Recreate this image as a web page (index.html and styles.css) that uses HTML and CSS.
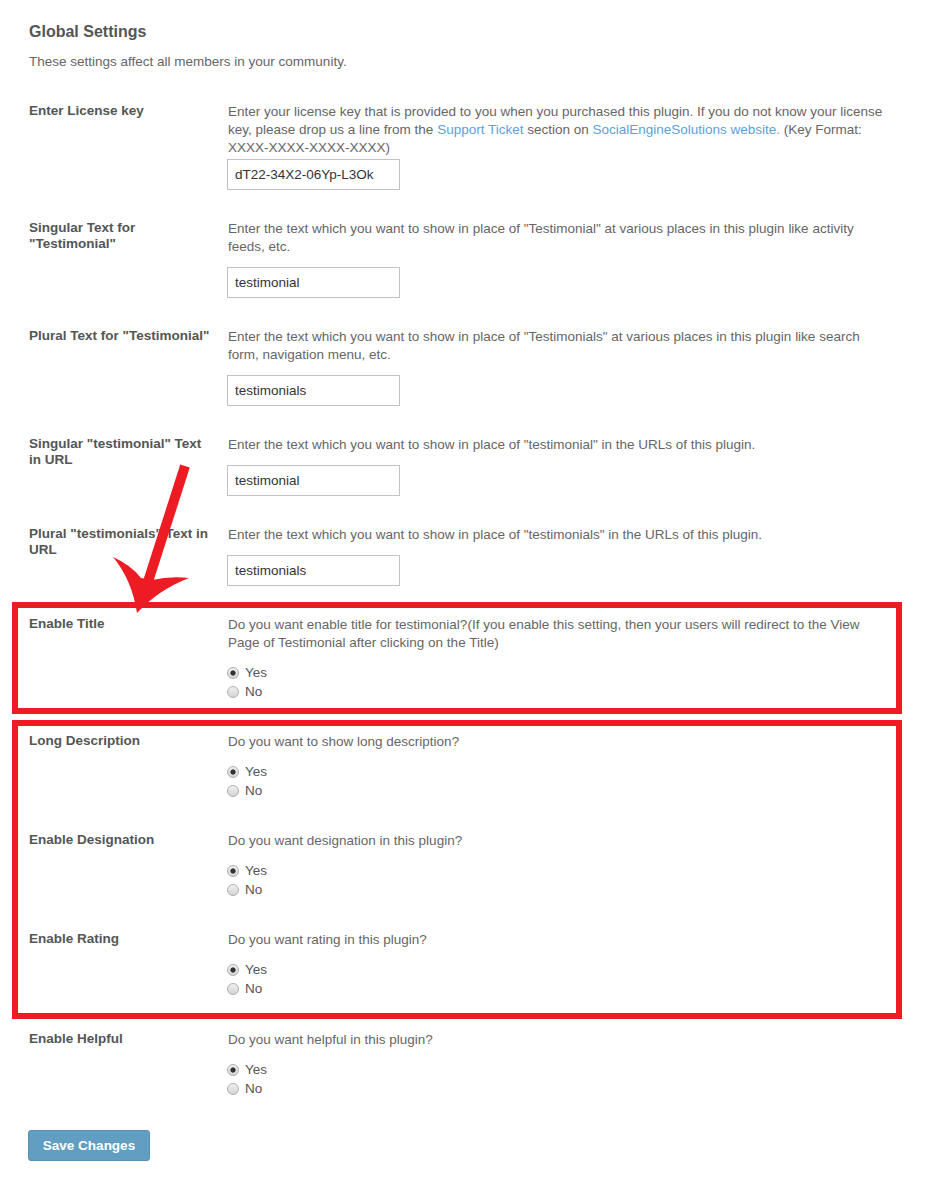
FILE: index.html
```html
<!DOCTYPE html>
<html lang="en">
<head>
    <meta charset="UTF-8">
    <title>Global Settings</title>
    <link rel="stylesheet" href="styles.css">
</head>
<body>
    <div class="page">
        <h2>Global Settings</h2>
        <p class="form-intro">These settings affect all members in your community.</p>

        <div class="row">
            <div class="row-label">Enter License key</div>
            <div class="row-element">
                <p class="row-desc tight">Enter your license key that is provided to you when you purchased this plugin. If you do not know your license key, please drop us a line from the <a href="#">Support Ticket</a> section on <a href="#">SocialEngineSolutions website.</a> (Key Format: XXXX-XXXX-XXXX-XXXX)</p>
                <input class="text-input" type="text" value="dT22-34X2-06Yp-L3Ok">
            </div>
        </div>

        <div class="row">
            <div class="row-label">Singular Text for "Testimonial"</div>
            <div class="row-element">
                <p class="row-desc">Enter the text which you want to show in place of "Testimonial" at various places in this plugin like activity feeds, etc.</p>
                <input class="text-input" type="text" value="testimonial">
            </div>
        </div>

        <div class="row">
            <div class="row-label">Plural Text for "Testimonial"</div>
            <div class="row-element">
                <p class="row-desc">Enter the text which you want to show in place of "Testimonials" at various places in this plugin like search form, navigation menu, etc.</p>
                <input class="text-input" type="text" value="testimonials">
            </div>
        </div>

        <div class="row">
            <div class="row-label">Singular "testimonial" Text in URL</div>
            <div class="row-element">
                <p class="row-desc">Enter the text which you want to show in place of "testimonial" in the URLs of this plugin.</p>
                <input class="text-input" type="text" value="testimonial">
            </div>
        </div>

        <div class="row">
            <div class="row-label">Plural "testimonials" Text in URL</div>
            <div class="row-element">
                <p class="row-desc">Enter the text which you want to show in place of "testimonials" in the URLs of this plugin.</p>
                <input class="text-input" type="text" value="testimonials">
            </div>
        </div>

        <div class="callout callout-first">
            <div class="row">
                <div class="row-label">Enable Title</div>
                <div class="row-element">
                    <p class="row-desc">Do you want enable title for testimonial?(If you enable this setting, then your users will redirect to the View Page of Testimonial after clicking on the Title)</p>
                    <div class="radios">
                        <label class="radio"><input type="radio" name="title" checked>Yes</label>
                        <label class="radio"><input type="radio" name="title">No</label>
                    </div>
                </div>
            </div>
        </div>

        <div class="callout callout-second">
            <div class="row">
                <div class="row-label">Long Description</div>
                <div class="row-element">
                    <p class="row-desc">Do you want to show long description?</p>
                    <div class="radios">
                        <label class="radio"><input type="radio" name="longdesc" checked>Yes</label>
                        <label class="radio"><input type="radio" name="longdesc">No</label>
                    </div>
                </div>
            </div>
            <div class="row">
                <div class="row-label">Enable Designation</div>
                <div class="row-element">
                    <p class="row-desc">Do you want designation in this plugin?</p>
                    <div class="radios">
                        <label class="radio"><input type="radio" name="designation" checked>Yes</label>
                        <label class="radio"><input type="radio" name="designation">No</label>
                    </div>
                </div>
            </div>
            <div class="row">
                <div class="row-label">Enable Rating</div>
                <div class="row-element">
                    <p class="row-desc">Do you want rating in this plugin?</p>
                    <div class="radios">
                        <label class="radio"><input type="radio" name="rating" checked>Yes</label>
                        <label class="radio"><input type="radio" name="rating">No</label>
                    </div>
                </div>
            </div>
        </div>

        <div class="row">
            <div class="row-label">Enable Helpful</div>
            <div class="row-element">
                <p class="row-desc">Do you want helpful in this plugin?</p>
                <div class="radios">
                    <label class="radio"><input type="radio" name="helpful" checked>Yes</label>
                    <label class="radio"><input type="radio" name="helpful">No</label>
                </div>
            </div>
        </div>

        <button class="save-btn" type="button">Save Changes</button>

        <svg class="arrow" width="100" height="165" viewBox="100 455 100 165">
            <line x1="185" y1="466" x2="146" y2="588" stroke="#ed1c24" stroke-width="10"/>
            <path d="M113,557 Q131,565 141,578 L152,580 Q170,576 189,578 Q158,590 137,613 Q132,580 113,557 Z" fill="#ed1c24"/>
        </svg>
    </div>
</body>
</html>
```

FILE: styles.css
```css
body {
    margin: 0;
    background: #fff;
    font-family: 'Liberation Sans', Arial, sans-serif;
    font-size: 13.5px;
    color: #666;
}
.page {
    position: relative;
    width: 862px;
    padding: 22px 50px 40px 29px;
}
.page h2 {
    margin: 0 0 11px;
    font-size: 16px;
    line-height: 20px;
    font-weight: bold;
    color: #555;
}
.form-intro {
    margin: 0 0 32px;
    line-height: 18px;
}
.row {
    display: flex;
    margin-bottom: 30px;
}
.row-label {
    width: 185px;
    flex-shrink: 0;
    padding-right: 14px;
    font-weight: bold;
    line-height: 16px;
    color: #555;
}
.row-element {
    flex: 1;
}
.row-desc {
    margin: 0 0 11px;
    line-height: 18px;
}
.row-desc.tight {
    margin-bottom: 2px;
}
.row-desc a {
    color: #5d9fd6;
    text-decoration: none;
}
.text-input {
    display: block;
    box-sizing: border-box;
    width: 173px;
    height: 31px;
    margin-left: -1px;
    padding: 0 7px;
    border: 1px solid #c2c2c2;
    font-family: inherit;
    font-size: 13.5px;
    color: #333;
}
.radios {
    padding-bottom: 2px;
}
.radio {
    display: flex;
    align-items: center;
    height: 19px;
    color: #555;
}
.radio input {
    appearance: none;
    -webkit-appearance: none;
    width: 12px;
    height: 12px;
    margin: 0 6px 0 -1px;
    border: 1px solid #b0b0b0;
    border-radius: 50%;
    background: linear-gradient(#f0f0f0, #d4d4d4);
}
.radio input:checked {
    background: radial-gradient(circle, #333 0, #333 2.2px, transparent 3px), linear-gradient(#f0f0f0, #d4d4d4);
}
/* red annotation boxes */
.callout {
    border: 6px solid #ed1c24;
    margin-left: -17px;
    margin-right: -11px;
    padding-left: 11px;
    padding-right: 5px;
}
.callout .row:last-child {
    margin-bottom: 0;
}
.callout-first {
    margin-top: -14px;
    padding-top: 8px;
    padding-bottom: 5px;
    margin-bottom: 6px;
}
.callout-second {
    padding-top: 7px;
    padding-bottom: 13px;
    margin-bottom: 12px;
}
.save-btn {
    display: block;
    width: 122px;
    height: 31px;
    margin-left: -1px;
    border: 1px solid #5891b3;
    border-radius: 3px;
    background: #619ec1;
    color: #fff;
    font-family: inherit;
    font-size: 13.5px;
    font-weight: bold;
}
.arrow {
    position: absolute;
    left: 100px;
    top: 455px;
}
```
